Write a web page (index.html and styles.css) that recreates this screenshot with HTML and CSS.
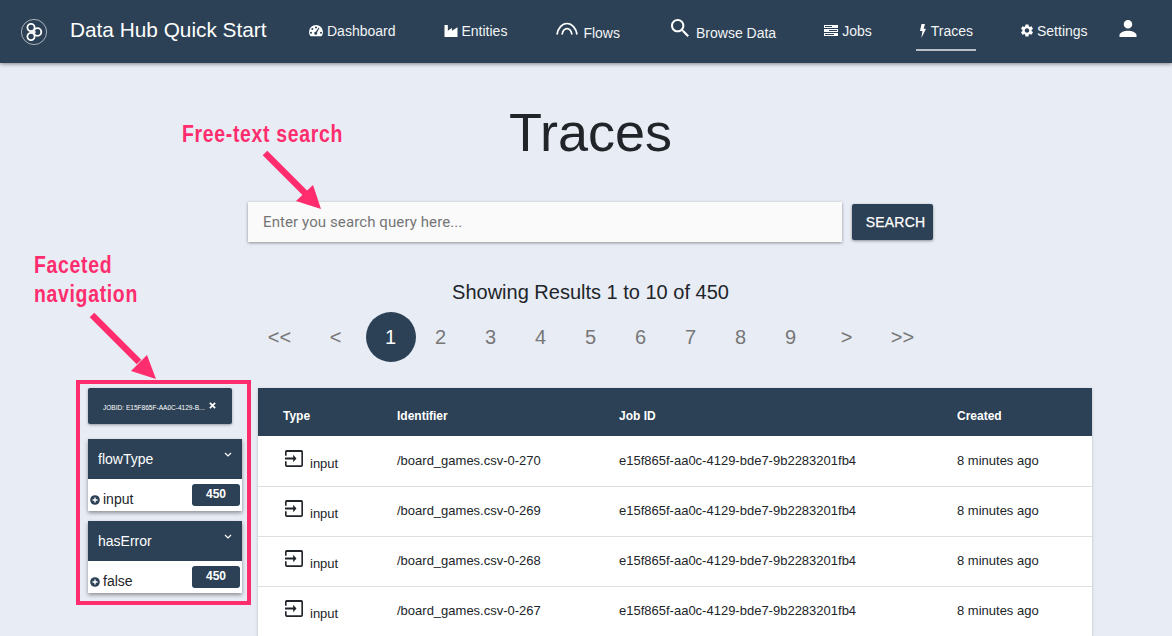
FILE: index.html
```html
<!DOCTYPE html>
<html lang="en">
<head>
<meta charset="utf-8">
<title>Traces</title>
<link rel="stylesheet" href="styles.css">
</head>
<body>
<header class="topbar">
  <svg class="logo" viewBox="0 0 28 28" fill="none" stroke="#fff">
    <circle cx="14" cy="14" r="12.6" stroke-width=".8" opacity=".75"/>
    <circle cx="11" cy="9.5" r="3.6" stroke-width="1.8"/>
    <circle cx="11" cy="18.5" r="3.6" stroke-width="1.8"/>
    <circle cx="17.5" cy="14" r="3.8" stroke-width="1.8"/>
    <circle cx="14" cy="14" r="1.2" stroke-width="1.1"/>
  </svg>
  <div class="brand">Data Hub Quick Start</div>
  <nav class="nav">
    <a class="nav-item nav-dashboard">
      <svg class="ico ico-14" viewBox="0 0 14 12" fill="#fff"><path fill-rule="evenodd" d="M7 .5A7 7 0 0 0 0 7.5c0 1.4.4 2.7 1.1 3.8.2.3.5.4.8.4h10.2c.3 0 .6-.1.8-.4.7-1.1 1.1-2.4 1.1-3.8a7 7 0 0 0-7-7zM7 2a1 1 0 1 1 0 2 1 1 0 0 1 0-2zM3.3 3.6a1 1 0 1 1 0 2 1 1 0 0 1 0-2zM2 7.2a1 1 0 1 1 0 2 1 1 0 0 1 0-2zm10 0a1 1 0 1 1 0 2 1 1 0 0 1 0-2zM10.500 3.600 8 8a1.500 1.500 0 1 1-1.200-.7L9.600 3.200z"/></svg>
      Dashboard
    </a>
    <a class="nav-item nav-entities">
      <svg class="ico ico-14" viewBox="0 0 14 14" fill="#fff"><path d="M0 1h3.600v6.200L8 4.400v2.800l6-3.700V14H0z"/></svg>
      Entities
    </a>
    <a class="nav-item nav-flows">
      <svg class="ico-flows" viewBox="0 0 22 13" fill="none" stroke="#fff" stroke-width="1.700"><path d="M1 12.500C2 6 6 1.500 11 1.500S20 6 21 12.500"/><path d="M6 12.500C6.700 9 8.500 6.600 11 6.600S15.300 9 16 12.500"/></svg>
      <span class="low">Flows</span>
    </a>
    <a class="nav-item nav-browse">
      <svg class="ico-search" viewBox="3 3 17.500 17.500" fill="#fff"><path d="M15.500 14h-.79l-.28-.27C15.410 12.590 16 11.110 16 9.500 16 5.910 13.090 3 9.500 3S3 5.910 3 9.500 5.910 16 9.500 16c1.610 0 3.090-.59 4.230-1.570l.27.28v.79l5 4.990L20.490 19l-4.990-5zm-6 0C7.010 14 5 11.990 5 9.500S7.010 5 9.500 5 14 7.010 14 9.500 11.990 14 9.500 14z"/></svg>
      <span class="low">Browse Data</span>
    </a>
    <a class="nav-item nav-jobs">
      <svg class="ico ico-14" viewBox="0 0 14 12" fill="#fff"><path d="M0 .5h14v3H0zM1 1.500v1h7v-1zM0 4.500h14v3H0zM5 5.500v1h8v-1zM0 8.500h14v3H0zM1 9.500v1h9v-1z" fill-rule="evenodd"/></svg>
      Jobs
    </a>
    <a class="nav-item nav-traces">
      <svg class="ico-bolt" viewBox="0 0 6 14" fill="#fff"><path d="M1.500 0h3.500L3.600 4.800H6L1.400 14l1-7H0z"/></svg>
      Traces
    </a>
    <a class="nav-item nav-settings">
      <svg class="ico ico-gear" viewBox="2.500 2 19 20" fill="#fff"><path d="M19.140 12.940c.04-.3.06-.61.06-.94 0-.32-.02-.64-.07-.94l2.030-1.580c.18-.14.230-.41.120-.61l-1.920-3.320c-.12-.22-.37-.29-.59-.22l-2.390.96c-.5-.38-1.030-.7-1.620-.94l-.36-2.540c-.04-.24-.24-.41-.48-.41h-3.840c-.24 0-.43.170-.47.410l-.36 2.540c-.59.24-1.130.57-1.620.94l-2.390-.96c-.22-.08-.47 0-.59.220L2.740 8.870c-.12.210-.08.470.120.610l2.030 1.580c-.05.3-.09.630-.09.940s.02.640.07.940l-2.030 1.580c-.18.140-.23.410-.12.610l1.920 3.320c.12.220.37.290.59.220l2.390-.96c.5.38 1.030.7 1.620.94l.36 2.540c.05.240.24.410.48.410h3.840c.24 0 .44-.17.47-.41l.36-2.540c.59-.24 1.130-.56 1.620-.94l2.390.96c.22.080.47 0 .59-.22l1.920-3.320c.12-.22.070-.47-.12-.61l-2.010-1.580zM12 15.600c-1.980 0-3.600-1.620-3.600-3.600s1.620-3.600 3.600-3.600 3.600 1.620 3.600 3.600-1.620 3.600-3.600 3.600z"/></svg>
      Settings
    </a>
    <a class="nav-item nav-user">
      <svg class="ico-user" viewBox="4 4 16 16" fill="#fff"><path d="M12 12c2.210 0 4-1.790 4-4s-1.790-4-4-4-4 1.790-4 4 1.790 4 4 4zm0 2c-2.670 0-8 1.340-8 4v2h16v-2c0-2.660-5.330-4-8-4z"/></svg>
    </a>
  </nav>
</header>

<main class="page">
  <h1 class="title">Traces</h1>
  <div class="search-row">
    <input class="search-input" type="text" placeholder="Enter you search query here...">
    <button class="search-btn">SEARCH</button>
  </div>
  <div class="results">Showing Results 1 to 10 of 450</div>
  <div class="pager">
    <span class="pg pg-ctl">&lt;&lt;</span>
    <span class="pg pg-ctl pg-prev">&lt;</span>
    <span class="pg pg-on">1</span>
    <span class="pg">2</span>
    <span class="pg">3</span>
    <span class="pg">4</span>
    <span class="pg">5</span>
    <span class="pg">6</span>
    <span class="pg">7</span>
    <span class="pg">8</span>
    <span class="pg">9</span>
    <span class="pg pg-ctl pg-next">&gt;</span>
    <span class="pg pg-ctl">&gt;&gt;</span>
  </div>

  <div class="lower">
    <aside class="facets">
      <div class="chip">
        <span class="chip-text">JOBID: E15F865F-AA0C-4129-B...</span>
        <svg class="chip-x" viewBox="0 0 8 8" fill="none" stroke="#fff" stroke-width="2"><path d="M1 1l6 6M7 1L1 7"/></svg>
      </div>
      <section class="facet">
        <div class="facet-head">
          <span>flowType</span>
          <svg class="chev" viewBox="0 0 8 5" fill="none" stroke="#fff" stroke-width="1.200"><path d="M1 1l3 3 3-3"/></svg>
        </div>
        <div class="facet-body">
          <svg class="plus" viewBox="0 0 10 10"><circle cx="5" cy="5" r="4.800" fill="#2c4155"/><path d="M5 2.500v5M2.500 5h5" stroke="#fff" stroke-width="1.400"/></svg>
          <span class="facet-label">input</span>
          <span class="badge">450</span>
        </div>
      </section>
      <section class="facet">
        <div class="facet-head">
          <span>hasError</span>
          <svg class="chev" viewBox="0 0 8 5" fill="none" stroke="#fff" stroke-width="1.200"><path d="M1 1l3 3 3-3"/></svg>
        </div>
        <div class="facet-body">
          <svg class="plus" viewBox="0 0 10 10"><circle cx="5" cy="5" r="4.800" fill="#2c4155"/><path d="M5 2.500v5M2.500 5h5" stroke="#fff" stroke-width="1.400"/></svg>
          <span class="facet-label">false</span>
          <span class="badge">450</span>
        </div>
      </section>
    </aside>

    <table class="grid">
      <thead>
        <tr><th class="c-type">Type</th><th class="c-id">Identifier</th><th class="c-job">Job ID</th><th class="c-created">Created</th></tr>
      </thead>
      <tbody>
        <tr>
          <td><span class="type-cell"><svg class="input-ico" viewBox="1 3 22 18" preserveAspectRatio="none" fill="#212529"><path d="M21 3.010H3c-1.100 0-2 .9-2 2V9h2V4.990h18v14.030H3V15H1v4.010c0 1.100.9 1.980 2 1.980h18c1.100 0 2-.88 2-1.980v-14c0-1.110-.9-2-2-2zM11 16l4-4-4-4v3H1v2h10v3z"/></svg><span class="type-text">input</span></span></td>
          <td>/board_games.csv-0-270</td><td>e15f865f-aa0c-4129-bde7-9b2283201fb4</td><td>8 minutes ago</td>
        </tr>
        <tr>
          <td><span class="type-cell"><svg class="input-ico" viewBox="1 3 22 18" preserveAspectRatio="none" fill="#212529"><path d="M21 3.010H3c-1.100 0-2 .9-2 2V9h2V4.990h18v14.030H3V15H1v4.010c0 1.100.9 1.980 2 1.980h18c1.100 0 2-.88 2-1.980v-14c0-1.110-.9-2-2-2zM11 16l4-4-4-4v3H1v2h10v3z"/></svg><span class="type-text">input</span></span></td>
          <td>/board_games.csv-0-269</td><td>e15f865f-aa0c-4129-bde7-9b2283201fb4</td><td>8 minutes ago</td>
        </tr>
        <tr>
          <td><span class="type-cell"><svg class="input-ico" viewBox="1 3 22 18" preserveAspectRatio="none" fill="#212529"><path d="M21 3.010H3c-1.100 0-2 .9-2 2V9h2V4.990h18v14.030H3V15H1v4.010c0 1.100.9 1.980 2 1.980h18c1.100 0 2-.88 2-1.980v-14c0-1.110-.9-2-2-2zM11 16l4-4-4-4v3H1v2h10v3z"/></svg><span class="type-text">input</span></span></td>
          <td>/board_games.csv-0-268</td><td>e15f865f-aa0c-4129-bde7-9b2283201fb4</td><td>8 minutes ago</td>
        </tr>
        <tr>
          <td><span class="type-cell"><svg class="input-ico" viewBox="1 3 22 18" preserveAspectRatio="none" fill="#212529"><path d="M21 3.010H3c-1.100 0-2 .9-2 2V9h2V4.990h18v14.030H3V15H1v4.010c0 1.100.9 1.980 2 1.980h18c1.100 0 2-.88 2-1.980v-14c0-1.110-.9-2-2-2zM11 16l4-4-4-4v3H1v2h10v3z"/></svg><span class="type-text">input</span></span></td>
          <td>/board_games.csv-0-267</td><td>e15f865f-aa0c-4129-bde7-9b2283201fb4</td><td>8 minutes ago</td>
        </tr>
      </tbody>
    </table>
  </div>
</main>

<div class="note note-search">Free-text search</div>
<div class="note note-facets">Faceted<br>navigation</div>
<div class="note-box"></div>
<svg class="arrows" viewBox="0 0 1172 636" fill="#ff2d6e" stroke="none">
  <path d="M265 153L306 194" stroke="#ff2d6e" stroke-width="6.500"/>
  <path d="M321 209L296 201L313 185z"/>
  <path d="M92 315L139 362" stroke="#ff2d6e" stroke-width="6.500"/>
  <path d="M156 379L131 371L147 355z"/>
</svg>
</body>
</html>
```

FILE: styles.css
```css
* { box-sizing: border-box; }
html, body { margin: 0; height: 636px; overflow: hidden; }
body {
  position: relative;
  background: #e8ecf4;
  color: #212529;
  font-family: "Liberation Sans", Arial, sans-serif;
}

/* top bar */
.topbar {
  display: flex;
  align-items: center;
  height: 63px;
  padding-left: 20px;
  background: #2c4155;
  box-shadow: 0 1px 4px rgba(0, 0, 0, .45);
  color: #fff;
}
.logo { width: 28px; height: 28px; flex: none; }
.brand { width: 197px; flex: none; margin: -3px 0 0 22px; font-size: 20.800px; white-space: nowrap; }
.nav { display: flex; align-items: center; height: 63px; margin-left: 42px; font-size: 14px; }
.nav-item {
  display: flex;
  align-items: center;
  gap: 4px;
  height: 63px;
  padding-bottom: 2px;
  color: #f2f4f6;
  white-space: nowrap;
}
.nav-entities { margin-left: 48px; }
.nav-flows { margin-left: 49px; gap: 5px; }
.nav-browse { margin-left: 51px; gap: 7px; }
.nav-jobs { margin-left: 48px; }
.nav-traces {
  position: relative;
  margin-left: 44px;
  padding: 0 3px 2px 4px;
  gap: 5px;
}
.nav-traces::after {
  content: "";
  position: absolute;
  left: 0;
  right: 0;
  top: 49px;
  height: 2px;
  background: #b7bfc7;
}
.nav-settings { margin-left: 45px; }
.nav-user { margin-left: 31px; }
.ico { display: block; flex: none; }
.ico-14 { width: 14px; height: 13px; }
.ico-flows { width: 22px; height: 13px; margin-top: -5px; }
.ico-search { width: 18px; height: 18px; margin-top: -6px; }
.ico-bolt { width: 6px; height: 14px; }
.ico-gear { width: 12px; height: 13px; }
.ico-user { width: 18px; height: 17px; margin-top: -4px; }
.low { position: relative; top: 2px; }

/* main */
.page { padding-left: 9px; }
.title {
  margin: 0;
  padding-top: 37px;
  height: 139px;
  text-align: center;
  font-size: 54px;
  line-height: 64px;
  font-weight: 400;
}
.search-row {
  display: flex;
  justify-content: center;
  align-items: center;
  gap: 10px;
  height: 40px;
}
.search-input {
  width: 594px;
  height: 40px;
  padding: 0 15px;
  border: 0;
  background: #fafafa;
  box-shadow: 0 1px 3px rgba(0, 0, 0, .4);
  font-family: Roboto, sans-serif;
  font-size: 15px;
  letter-spacing: .1px;
}
.search-input::placeholder { color: #757575; opacity: 1; }
.search-btn {
  width: 81px;
  height: 36px;
  padding: 0 0 0 6px;
  border: 0;
  border-radius: 2px;
  background: #2c4155;
  box-shadow: 0 1px 3px rgba(0, 0, 0, .4);
  color: #fff;
  font-family: "Liberation Sans", Arial, sans-serif;
  font-size: 14px;
  letter-spacing: .2px;
  -webkit-text-stroke: .25px #fff;
}
.results {
  margin-top: 38px;
  height: 24px;
  line-height: 24px;
  text-align: center;
  font-size: 20px;
}
.pager {
  display: flex;
  justify-content: center;
  margin: 8px 0 0 1px;
  height: 50px;
  color: #777;
  font-size: 20px;
}
.pg {
  display: flex;
  align-items: center;
  justify-content: center;
  width: 50px;
  height: 50px;
}
.pg-ctl { width: 56px; }
.pg-prev { margin-right: 2px; }
.pg-next { margin-left: 3px; }
.pg-on { border-radius: 50%; background: #2c4155; color: #fff; }

/* lower */
.lower {
  display: flex;
  align-items: flex-start;
  gap: 16px;
  margin-top: 26px;
  padding-left: 79px;
}
.facets { width: 154px; flex: none; }
.chip {
  display: flex;
  align-items: center;
  gap: 4px;
  width: 144px;
  height: 36px;
  padding-left: 15px;
  border-radius: 2px;
  background: #2c4155;
  box-shadow: 0 1px 3px rgba(0, 0, 0, .35);
  color: #fff;
  font-size: 6.550px;
}
.chip-text { position: relative; top: 1px; white-space: nowrap; }
.chip-x { width: 7px; height: 7px; margin-top: -1px; }
.facet {
  margin-top: 10px;
  background: #fff;
  box-shadow: 0 2px 4px rgba(0, 0, 0, .4);
}
.chip + .facet { margin-top: 15px; }
.facet-head {
  display: flex;
  justify-content: space-between;
  height: 40px;
  padding: 0 10px;
  background: #2c4155;
  color: #fff;
  font-size: 14px;
  line-height: 41px;
}
.chev { width: 8px; height: 5px; margin-top: 13px; }
.facet-body {
  position: relative;
  display: flex;
  align-items: center;
  height: 32px;
  padding: 8px 2px 0;
  font-size: 14px;
}
.plus { width: 10px; height: 10px; margin-top: 2px; }
.facet-label { margin-left: 3px; }
.badge {
  position: absolute;
  right: 2px;
  top: 5px;
  width: 48px;
  height: 22px;
  border-radius: 3px;
  background: #2c4155;
  color: #fff;
  text-align: center;
  font-size: 12px;
  font-weight: 700;
  line-height: 21px;
}

/* table */
.grid {
  width: 834px;
  flex: none;
  table-layout: fixed;
  border-collapse: collapse;
  background: #fff;
  box-shadow: 0 1px 3px rgba(0, 0, 0, .2);
  font-size: 13px;
}
.grid th {
  height: 48px;
  padding: 8px 0 0;
  background: #2c4155;
  color: #fff;
  text-align: left;
  font-size: 12px;
  font-weight: 700;
}
.c-type { width: 139px; padding-left: 25px !important; }
.c-id { width: 222px; }
.c-job { width: 338px; }
.grid td {
  height: 50px;
  padding: 0 0 1px;
  border-bottom: 1px solid #dfdfdf;
}
.grid td:first-child { padding-left: 27px; }
.type-cell { display: flex; align-items: center; gap: 7px; }
.input-ico { width: 18px; height: 17px; margin-top: -4px; }
.type-text { position: relative; top: 3px; }

/* annotations */
.note {
  position: absolute;
  color: #ff2d6e;
  font-family: "Liberation Sans", sans-serif;
  font-size: 23px;
  font-weight: 700;
  letter-spacing: .8px;
  line-height: 29px;
  white-space: nowrap;
  transform: scaleX(.845);
  transform-origin: left center;
}
.note-search { left: 182px; top: 120px; }
.note-facets { left: 34px; top: 251px; }
.note-box {
  position: absolute;
  left: 76px;
  top: 380px;
  width: 175px;
  height: 225px;
  border: 4px solid #ff2d6e;
}
.arrows {
  position: absolute;
  left: 0;
  top: 0;
  width: 1172px;
  height: 636px;
  pointer-events: none;
}
```
